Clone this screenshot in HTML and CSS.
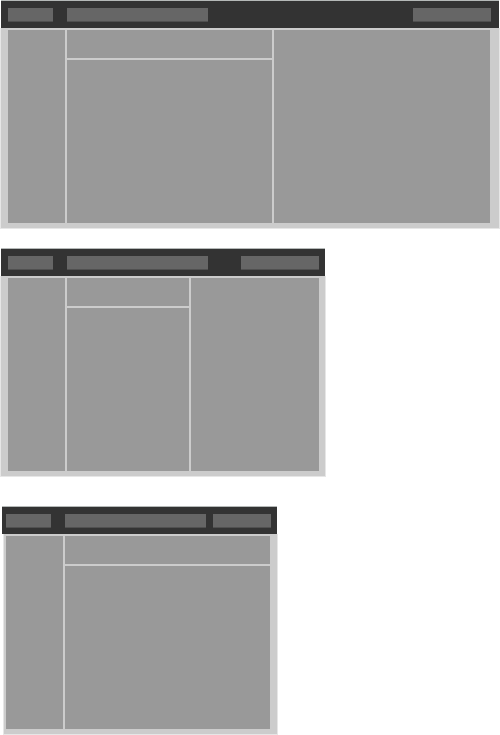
FILE: index.html
```html
<!DOCTYPE html>
<html lang="en">
<head>
<meta charset="utf-8">
<link rel="stylesheet" href="styles.css">
</head>
<body>
<main class="layouts">
  <section class="frame wide">
    <header class="topbar">
      <div class="bar logo"></div>
      <div class="bar search"></div>
      <div class="bar account"></div>
    </header>
    <div class="content">
      <div class="panel"></div>
      <div class="stack"><div class="panel"></div><div class="panel"></div></div>
      <div class="panel"></div>
    </div>
  </section>
  <section class="frame medium">
    <header class="topbar">
      <div class="bar logo"></div>
      <div class="bar search"></div>
      <div class="bar account"></div>
    </header>
    <div class="content">
      <div class="panel"></div>
      <div class="stack"><div class="panel"></div><div class="panel"></div></div>
      <div class="panel"></div>
    </div>
  </section>
  <section class="frame narrow">
    <header class="topbar">
      <div class="bar logo"></div>
      <div class="bar search"></div>
      <div class="bar account"></div>
    </header>
    <div class="content">
      <div class="panel"></div>
      <div class="stack"><div class="panel"></div><div class="panel"></div></div>
    </div>
  </section>
</main>
</body>
</html>
```
FILE: styles.css
```css
* {
  box-sizing: border-box;
}

body {
  margin: 0;
  background: #fff;
  font-family: "Liberation Sans", sans-serif;
}

.topbar {
  display: flex;
  align-items: center;
  height: 28px;
  padding: 0 8px 0 7px;
  margin: 0 1px;
  background: #333;
  border-top: 1px solid #b5b9b8;
}

.bar {
  height: 14px;
  background: #666;
  border-bottom: 1px solid #505050;
}

.logo {
  flex: 0 0 45px;
  margin-right: 14px;
}

.search {
  flex: 0 0 141px;
}

.account {
  flex: 0 0 78px;
  margin-left: auto;
}

.content {
  display: grid;
  grid-template-columns: 57px 205fr 216fr;
  grid-template-rows: minmax(193px, auto);
  gap: 2px;
  padding: 2px 9px 5px 7px;
  background: #ccc;
  border: 1px solid #e6e6e6;
  border-top: 0;
}

.panel {
  background: #999;
}

.stack {
  display: grid;
  grid-template-rows: 28px 1fr;
  gap: 2px;
}

.medium {
  width: 65.2%;
  margin-top: 19px;
}

.medium .topbar {
  padding-right: 6px;
}

.medium .content {
  padding-right: 6px;
}

.narrow {
  width: 55.4%;
  margin: 29px 0 0 1px;
}

.narrow .topbar {
  padding: 0 6px 0 4px;
}

.narrow .content {
  grid-template-columns: 57px 1fr;
  margin-left: 2px;
  padding-left: 2px;
  padding-right: 7px;
}

.narrow .account {
  flex-basis: 58px;
}
```
